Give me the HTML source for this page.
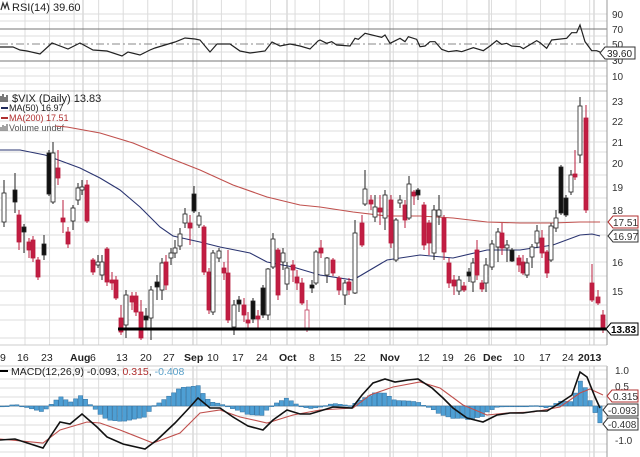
<!DOCTYPE html>
<html><head><meta charset="utf-8"><style>
html,body{margin:0;padding:0;background:#fff;width:640px;height:457px;overflow:hidden}
svg{display:block;font-family:"Liberation Sans",Arial,sans-serif}
</style></head><body>
<svg id="s" width="640" height="457" viewBox="0 0 640 457" xmlns="http://www.w3.org/2000/svg">
<rect width="640" height="457" fill="#fff"/>
<g id="grid" stroke="#dcdcdc" stroke-width="1"></g>
<g id="main"></g>
<line x1="0" y1="29" x2="607" y2="29" stroke="#777"/>
<line x1="0" y1="44" x2="607" y2="44" stroke="#888" stroke-dasharray="8,3,2,3"/>
<line x1="0" y1="61" x2="607" y2="61" stroke="#777"/>
<line x1="0" y1="91" x2="607" y2="91" stroke="#bbb"/>
<line x1="607" y1="0" x2="607" y2="345" stroke="#999"/>
<line x1="607" y1="366" x2="607" y2="457" stroke="#999"/>
<text x="12" y="11" font-size="11" fill="#222">RSI(14) 39.60</text>
<path d="M1 10 L3 3 L5 8 L7 3 L9 10" stroke="#333" fill="none" stroke-width="1.3"/>
<g font-size="10" fill="#333">
<text x="612" y="18">90</text><text x="612" y="33">70</text><text x="612" y="48">50</text><text x="612" y="64">30</text><text x="612" y="80">10</text>
</g>
<polyline id="rsi" fill="none" stroke="#222" stroke-width="1.2"/>
<path d="M600 53 L605 47 H635 V59 H605 Z" fill="#fff" stroke="#333"/>
<text x="607" y="57" font-size="10" fill="#222">39.60</text>
<path d="M1 102 v-6 M3 102 v-8 M5 102 v-5 M7 102 v-7" stroke="#333" stroke-width="1.3"/>
<text x="12" y="102" font-size="11" fill="#222">$VIX (Daily) 13.83</text>
<line x1="1" y1="108" x2="8" y2="108" stroke="#1f2a5a" stroke-width="2"/>
<text x="9" y="111" font-size="9" fill="#222">MA(50) 16.97</text>
<line x1="1" y1="118" x2="8" y2="118" stroke="#b03030" stroke-width="2"/>
<text x="9" y="121" font-size="9" fill="#b03030">MA(200) 17.51</text>
<path d="M1 131v-4M3 131v-6M5 131v-5M7 131v-7" stroke="#666" stroke-width="1.2"/>
<text x="9" y="131" font-size="9" fill="#555">Volume undef</text>
<g font-size="10" fill="#333">
<text x="612" y="105">23</text><text x="612" y="125">22</text><text x="612" y="146">21</text><text x="612" y="167">20</text><text x="612" y="191">19</text><text x="612" y="214">18</text><text x="612" y="266">16</text><text x="612" y="295">15</text>
</g>
<polyline id="ma200" fill="none" stroke="#c0504d" stroke-width="1.1"/>
<polyline id="ma50" fill="none" stroke="#2a3470" stroke-width="1.1"/>
<g id="candles"></g>
<line x1="118" y1="329" x2="607" y2="329" stroke="#000" stroke-width="3"/>
<path d="M608 222 L613 216 H638 V228 H613 Z" fill="#fff" stroke="#b03030"/>
<text x="613" y="226" font-size="10" fill="#333">17.51</text>
<path d="M608 236 L613 230 H638 V242 H613 Z" fill="#fff" stroke="#333"/>
<text x="613" y="240" font-size="10" fill="#333">16.97</text>
<path d="M606 329 L611 323 H638 V335 H611 Z" fill="#fff" stroke="#000"/>
<text x="611" y="333" font-size="10" font-weight="bold" fill="#000">13.83</text>
<g id="dates" font-size="10.5" fill="#222"></g>
<line x1="0" y1="366" x2="607" y2="366" stroke="#ccc"/>
<line x1="0" y1="406" x2="607" y2="406" stroke="#aaa"/>
<line x1="0" y1="371" x2="8" y2="371" stroke="#000" stroke-width="2"/>
<text x="11" y="375" font-size="10.5" fill="#222">MACD(12,26,9) -0.093, <tspan fill="#b03030">0.315</tspan>, <tspan fill="#5aa0c8">-0.408</tspan></text>
<g font-size="10" fill="#333">
<text x="615" y="374">1.0</text><text x="615" y="390">0.5</text><text x="615" y="444">-1.0</text>
</g>
<g id="hist"></g>
<polyline id="sig" fill="none" stroke="#c0504d" stroke-width="1.1"/>
<polyline id="macd" fill="none" stroke="#111" stroke-width="1.6"/>
<path d="M607 396 L612 390 H638 V402 H612 Z" fill="#fff" stroke="#b03030"/>
<text x="613" y="400" font-size="10" fill="#333">0.315</text>
<path d="M603 410 L608 404 H638 V416 H608 Z" fill="#fff" stroke="#333"/>
<text x="608" y="414" font-size="10" fill="#333">-0.093</text>
<path d="M603 424 L608 418 H638 V430 H608 Z" fill="#fff" stroke="#333"/>
<text x="608" y="428" font-size="10" fill="#333">-0.408</text>
</svg>
<script>
var NS="http://www.w3.org/2000/svg";
function el(p,t,a){var e=document.createElementNS(NS,t);for(var k in a)e.setAttribute(k,a[k]);p.appendChild(e);return e;}
function pts(a){return a.map(function(p){return p[0]+","+p[1]}).join(" ");}
var g=document.getElementById("grid");
var months=[83,193,287,390,489,594];
for(var x=25;x<607;x+=24.55){el(g,"line",{x1:x,y1:0,x2:x,y2:345});el(g,"line",{x1:x,y1:366,x2:x,y2:457});}
months.forEach(function(x){el(g,"line",{x1:x,y1:0,x2:x,y2:345,stroke:"#c4c4c4"});el(g,"line",{x1:x,y1:366,x2:x,y2:457,stroke:"#c4c4c4"});});
[14,21,36,52,68,76,84].forEach(function(y){el(g,"line",{x1:0,y1:y,x2:607,y2:y});});
[101,111,121,131,142,152,163,175,187,198,210,222,235,248,262,276,291,305,320,338].forEach(function(y){el(g,"line",{x1:0,y1:y,x2:607,y2:y});});
[370,379,388,397,416,425,434,444,452].forEach(function(y){el(g,"line",{x1:0,y1:y,x2:607,y2:y});});
el(g,"line",{x1:0,y1:345,x2:607,y2:345,stroke:"#ccc"});
var r1=[[0,47],[13,47],[20,50],[27,51],[40,54],[52,43],[68,49],[80,43],[93,50],[107,51],[122,56],[128,52],[140,55],[150,50],[155,48],[165,45],[175,42],[185,38],[195,39],[200,40],[210,52],[217,44],[230,44],[240,51],[250,53],[265,51],[272,42],[280,46],[290,44],[300,46],[310,49],[318,41]];
var z8=[[0,120],[20,130],[35,125],[50,135],[90,138],[105,115],[115,118],[135,100],[185,112],[195,105],[210,130],[240,115],[255,125],[265,110],[290,118],[300,140],[315,138],[330,125],[345,125],[365,148],[385,155],[410,152],[425,155],[460,143],[490,152],[510,138],[530,122],[545,133],[560,130],[575,138],[600,140],[610,146],[650,122],[660,128],[680,145],[695,120],[740,115],[755,98],[770,98],[780,75],[795,125],[815,152],[830,152],[845,158]];
z8.forEach(function(p){r1.push([320+p[0]/3,p[1]/3]);});
document.getElementById("rsi").setAttribute("points",pts(r1));
document.getElementById("ma50").setAttribute("points",pts([[0,150],[20,150],[45,155],[80,168],[100,178],[120,190],[140,207],[160,227],[173,236],[200,242],[220,247],[250,253],[267,262],[293,267],[320,275],[353,280],[387,260],[420,255],[453,258],[487,250],[520,250],[553,245],[580,235],[592,234],[600,236]]));
document.getElementById("ma200").setAttribute("points",pts([[55,126],[67,127],[100,133],[133,143],[167,157],[200,170],[233,185],[267,197],[300,205],[320,207],[353,212],[387,216],[420,216],[453,218],[487,222],[520,223],[553,223],[580,222],[600,222]]));
var C=[[4,193,222,"w",180,227],[15,190,202,"b",173,213],[19,215,242,"r",210,250],[24,227,232,"b",224,253],[29,242,250,"r",238,258],[33,240,258,"r",236,262],[38,260,277,"r",257,280],[44,244,255,"b",235,260],[49,153,194,"b",150,196],[53,153,202,"w",142,204],[58,168,178,"r",150,185],[63,218,222,"r",200,233],[68,232,244,"r",227,248],[73,208,221,"w",205,230],[78,188,200,"w",183,205],[82,187,190,"w",180,195],[87,185,221,"r",180,223],[93,260,272,"r",258,275],[98,262,265,"w",255,268],[102,262,275,"w",255,280],[107,249,282,"r",247,286],[112,280,283,"r",272,290],[116,280,298,"r",276,300],[121,318,332,"r",305,335],[126,295,325,"w",290,338],[132,296,302,"r",292,310],[136,296,312,"r",292,316],[141,312,338,"r",300,340],[146,316,320,"b",308,330],[151,290,318,"w",286,340],[157,282,287,"b",275,300],[162,263,290,"w",258,300],[166,262,285,"r",255,290],[171,253,258,"w",248,265],[175,248,253,"w",240,258],[180,234,246,"w",228,250],[185,214,223,"w",208,228],[190,223,228,"r",215,245],[194,194,211,"b",186,213],[199,216,225,"w",212,228],[204,227,272,"r",225,275],[209,272,310,"r",268,314],[213,253,312,"w",250,315],[219,251,258,"w",248,262],[224,268,273,"r",262,280],[228,273,320,"r",250,323],[234,305,327,"w",300,335],[239,300,304,"b",296,312],[244,305,315,"r",298,322],[248,320,323,"r",312,328],[253,301,319,"b",298,323],[258,316,319,"r",310,328],[263,288,315,"b",285,318],[268,269,315,"w",268,320],[273,239,267,"w",233,269],[278,250,295,"r",248,300],[283,253,262,"w",248,270],[287,268,284,"w",262,290],[293,265,270,"r",260,282],[297,277,283,"r",270,290],[302,283,303,"r",278,305],[307,310,330,"R",300,332],[312,285,288,"b",280,293],[316,252,283,"w",250,285],
[321,248,253,"r",240,258],[327,258,275,"w",257,283],[333,260,273,"r",258,276],[339,278,290,"r",276,295],[345,283,295,"w",280,305],[349,282,290,"r",278,295],[355,233,293,"w",220,294],[362,223,245,"r",215,247],[365,189,204,"w",170,206],[371,200,204,"r",195,210],[375,207,217,"w",195,222],[380,208,212,"r",195,225],[385,195,218,"w",190,230],[391,200,243,"r",195,248],[396,220,260,"w",218,262],[400,200,203,"w",195,208],[405,205,220,"r",200,228],[409,184,218,"w",176,220],[414,192,196,"r",190,205],[418,190,195,"b",188,200],[424,205,245,"r",202,250],[429,223,243,"r",220,255],[434,210,253,"w",205,260],[439,210,216,"w",195,225],[444,218,252,"r",215,260],[449,263,283,"r",258,288],[454,280,286,"r",275,295],[459,280,291,"w",276,295],[464,286,290,"r",282,292],[469,272,276,"b",268,282],[473,263,282,"w",258,292],[477,250,275,"r",240,280],[482,283,289,"r",280,292],[486,265,283,"w",258,292],[492,244,267,"w",240,270],[498,232,247,"w",228,262],[502,233,248,"r",223,255],[507,245,248,"w",240,262],[512,250,261,"b",248,262],[519,258,265,"r",255,272],[523,262,273,"r",255,275],[527,263,275,"w",258,278],[532,247,257,"w",244,268],[537,231,243,"w",225,248],[542,238,253,"r",230,258],[547,252,273,"r",250,278],[551,226,260,"w",223,262],[556,218,228,"w",210,232],[561,167,213,"b",165,215],[566,198,215,"b",195,217],[571,175,192,"w",170,195],[575,174,177,"r",150,180],[580,106,155,"w",97,163],[586,118,210,"r",105,213],[592,283,300,"r",264,302],[598,297,303,"r",290,305],[603,315,328,"r",310,333]];
var cg=document.getElementById("candles");
C.forEach(function(c){var col=c[3];var stroke=col=="r"?"#b81c3c":(col=="R"?"#c04060":"#222");
el(cg,"line",{x1:c[0],y1:c[4],x2:c[0],y2:c[5],stroke:stroke,"stroke-width":1});
var fill=col=="r"?"#c21d43":(col=="b"?"#111":"#fff");
el(cg,"rect",{x:c[0]-2,y:c[1],width:4,height:Math.max(2,c[2]-c[1]),fill:fill,stroke:stroke,"stroke-width":0.8});});
var D=[["9",0,0],["16",17,0],["23",41,0],["Aug",70,1],["6",90,0],["13",116,0],["20",140,0],["27",163,0],["Sep",184,1],["10",207,0],["17",232,0],["24",256,0],["Oct",279,1],["8",309,0],["15",330,0],["22",354,0],["Nov",380,1],["12",418,0],["19",442,0],["26",464,0],["Dec",483,1],["10",513,0],["17",539,0],["24",562,0],["2013",578,1]];
var dg=document.getElementById("dates");
D.forEach(function(d){var t=el(dg,"text",{x:d[1],y:361});if(d[2])t.setAttribute("font-weight","bold");t.textContent=d[0];});
var M=[[0,440],[15,439],[43,448],[50,437],[60,422],[70,424],[82,414],[97,427],[107,437],[123,444],[145,449],[157,440],[175,423],[190,407],[198,398],[210,408],[220,408],[233,417],[248,426],[263,430],[273,420],[287,410],[300,414],[310,414],[320,411],[333,407],[352,408],[362,395],[373,383],[385,379],[395,382],[408,380],[418,379],[432,388],[443,398],[453,408],[467,418],[483,422],[497,415],[510,413],[523,413],[537,411],[547,411],[560,403],[572,395],[580,372],[587,377],[595,397],[600,408]];
var S=[[0,439],[43,443],[60,430],[87,422],[100,423],[120,430],[153,443],[180,433],[200,413],[220,410],[240,417],[267,423],[293,415],[320,410],[353,408],[370,395],[393,387],[420,382],[440,388],[463,405],[487,415],[507,413],[533,412],[560,407],[580,393],[590,389],[603,395]];
document.getElementById("macd").setAttribute("points",pts(M));
document.getElementById("sig").setAttribute("points",pts(S));
function interp(a,x){for(var i=0;i<a.length-1;i++){if(x>=a[i][0]&&x<=a[i+1][0]){var t=(x-a[i][0])/(a[i+1][0]-a[i][0]);return a[i][1]+t*(a[i+1][1]-a[i][1]);}}return a[a.length-1][1];}
var hg=document.getElementById("hist");
for(var x=0;x<600;x+=4.9){var h=(interp(S,x+2)-interp(M,x+2))*1.2;var y=h>0?406-h:406;
el(hg,"rect",{x:x,y:y,width:4.3,height:Math.max(0.8,Math.abs(h)),fill:"#4e9fd4",stroke:"#2f6f9f","stroke-width":0.5});}
</script>
</body></html>
